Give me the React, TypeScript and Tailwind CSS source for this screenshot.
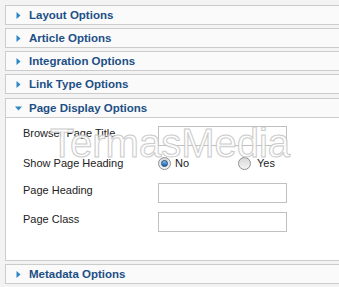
import React from 'react';

const font = { fontFamily: '"Liberation Sans", Arial, sans-serif' };

function Arrow({ open }: { open?: boolean }) {
  if (open) {
    return (
      <svg width="7" height="5" viewBox="0 0 7 5" className="ml-[9px] mr-[7px]">
        <path d="M0 0.5 L7 0.5 L3.5 4.5 Z" fill="#2b86c6" />
      </svg>
    );
  }
  return (
    <svg width="5" height="7" viewBox="0 0 5 7" className="ml-[10px] mr-[8px]">
      <path d="M0.5 0 L4.5 3.5 L0.5 7 Z" fill="#2b86c6" />
    </svg>
  );
}

function PanelHeader({ title, open }: { title: string; open?: boolean }) {
  return (
    <div className="h-[20px] flex items-center border border-[#cccccc] bg-[#fafafa]">
      <Arrow open={open} />
      <span className="text-[11.5px] font-bold text-[#1c4f86] leading-none pt-[1px]">{title}</span>
    </div>
  );
}

function Radio({ checked }: { checked?: boolean }) {
  return (
    <span className="w-[13px] h-[13px] rounded-full border border-[#8f8f8f] bg-gradient-to-b from-[#d8d8d8] to-[#f4f4f4] flex items-center justify-center">
      {checked && (
        <span className="w-[7px] h-[7px] rounded-full bg-gradient-to-b from-[#7fc0f0] to-[#0f5fae] border border-[#1a4f80]" />
      )}
    </span>
  );
}

function TextRow({ label, className }: { label: string; className?: string }) {
  return (
    <div className={`flex items-start ${className ?? ''}`}>
      <span className="w-[135px] text-[11px] leading-[15px] text-[#222]">{label}</span>
      <div className="w-[129px] h-[20px] border border-[#c0c0c0] bg-white" />
    </div>
  );
}

export default function App() {
  return (
    <div className="relative w-[339px] h-[287px] overflow-hidden bg-[#f3f3f3] pl-[5px] pt-[5px]" style={font}>
      <div className="w-[345px] flex flex-col">
        <PanelHeader title="Layout Options" />
        <div className="h-[3px]" />
        <PanelHeader title="Article Options" />
        <div className="h-[3px]" />
        <PanelHeader title="Integration Options" />
        <div className="h-[3px]" />
        <PanelHeader title="Link Type Options" />
        <div className="h-[4px]" />
        <PanelHeader title="Page Display Options" open />
        <div className="h-[143px] border border-t-0 border-[#cccccc] bg-white pl-[17px] pt-[8px]">
          <TextRow label="Browser Page Title" />
          <div className="flex items-center mt-[7px] h-[20px]">
            <span className="w-[135px] text-[11px] leading-[15px] text-[#222]">Show Page Heading</span>
            <Radio checked />
            <span className="ml-[4px] w-[63px] text-[11px] text-[#222]">No</span>
            <Radio />
            <span className="ml-[6px] text-[11px] text-[#222]">Yes</span>
          </div>
          <TextRow label="Page Heading" className="mt-[10px]" />
          <TextRow label="Page Class" className="mt-[9px]" />
        </div>
        <div className="h-[3px]" />
        <PanelHeader title="Metadata Options" />
      </div>
      <div className="pointer-events-none absolute left-[50px] top-[123px] text-[40px] leading-none text-[#fdfdfd] [-webkit-text-stroke:1px_#c6c6c6] opacity-90 whitespace-nowrap">
        TermasMedia
      </div>
    </div>
  );
}
